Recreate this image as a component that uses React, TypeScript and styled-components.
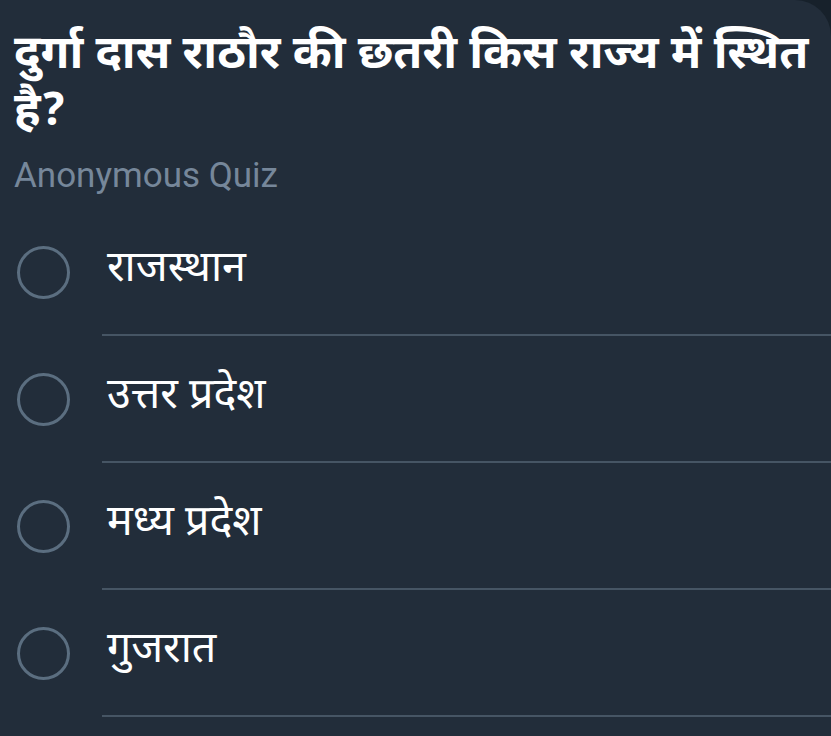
import React from "react";
import styled, { createGlobalStyle } from "styled-components";

const Global = createGlobalStyle`
  html, body { margin: 0; padding: 0; background: #17212b; }
  body { width: 831px; height: 736px; overflow: hidden; }
`;

const Bubble = styled.div`
  width: 831px;
  height: 736px;
  background: #222d3a;
  border-top-right-radius: 36px;
  box-sizing: border-box;
  display: flex;
  flex-direction: column;
  font-family: "Noto Sans Devanagari", "Lohit Devanagari", "Noto Sans", Roboto, sans-serif;
`;

const Question = styled.div`
  padding: 28px 14px 0 14px;
  height: 142px;
  box-sizing: border-box;
  color: #ffffff;
  font-size: 47px;
  font-weight: 700;
  line-height: 57px;
  white-space: nowrap;
`;

const Subtitle = styled.div`
  padding: 12px 14px 11px 14px;
  color: #76879a;
  font-family: Roboto, "Liberation Sans", sans-serif;
  font-size: 35px;
  line-height: 44px;
`;

const Options = styled.div`
  display: flex;
  flex-direction: column;
`;

const Row = styled.div`
  display: flex;
  align-items: stretch;
`;

const RadioCol = styled.div`
  width: 102px;
  flex: none;
  padding-left: 17px;
  box-sizing: border-box;
  padding-top: 37px;
`;

const Radio = styled.div`
  width: 53px;
  height: 53px;
  box-sizing: border-box;
  border-radius: 50%;
  border: 3px solid #5b6e80;
`;

const Label = styled.div`
  flex: 1;
  height: 127px;
  box-sizing: border-box;
  padding: 34px 0 0 5px;
  border-bottom: 2px solid #465564;
  color: #ffffff;
  font-size: 43px;
  line-height: 56px;
`;

const options = ["राजस्थान", "उत्तर प्रदेश", "मध्य प्रदेश", "गुजरात"];

export default function App() {
  return (
    <>
      <Global />
      <Bubble>
        <Question>
          दुर्गा दास राठौर की छतरी किस राज्य में स्थित
          <br />
          है?
        </Question>
        <Subtitle>Anonymous Quiz</Subtitle>
        <Options>
          {options.map((o) => (
            <Row key={o}>
              <RadioCol>
                <Radio />
              </RadioCol>
              <Label>{o}</Label>
            </Row>
          ))}
        </Options>
      </Bubble>
    </>
  );
}
